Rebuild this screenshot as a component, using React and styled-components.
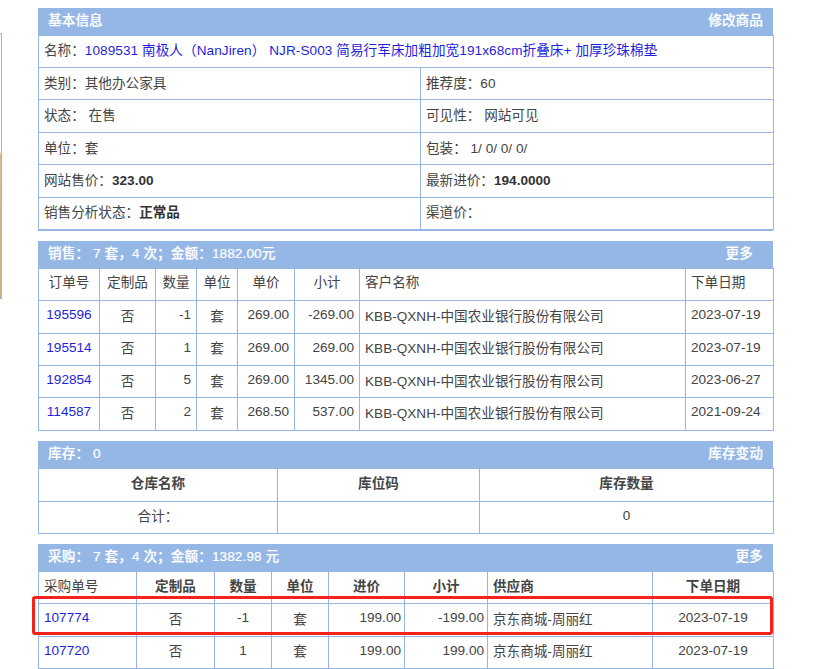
import React from 'react'
import styled, { createGlobalStyle } from 'styled-components'

const GlobalStyle = createGlobalStyle`
  html, body { margin: 0; padding: 0; background: #fff; overflow: hidden; }
  body {
    font-family: "Liberation Sans", "Noto Sans CJK SC", sans-serif;
    font-size: 13.6px;
    color: #444;
  }
`

const Page = styled.div`
  position: relative;
  display: flex;
  width: 821px;
  height: 669px;
  overflow: hidden;
`
const Side = styled.div`
  width: 1px;
  height: 264px;
  margin-top: 33px;
  border-top: 1px solid #95b7e6;
  border-right: 1px solid #95b7e6;
  border-bottom: 1px solid #95b7e6;
  background: linear-gradient(#fff 0 44%, #d9bd92 46%, #cfae84 100%);
`
const Main = styled.div`
  width: 735px;
  margin-left: 36px;
  padding-top: 8px;
`
const Panel = styled.section`
  margin-bottom: 10px;
  border-bottom: ${p => (p.$thick ? '1px' : '0')} solid #95b7e6;
`
const Head = styled.div`
  display: flex;
  justify-content: space-between;
  align-items: center;
  box-sizing: border-box;
  height: ${p => p.$h || 26.7}px;
  padding: 0 10px ${p => p.$up ?? 5}px;
  background: #95b7e6;
  color: #fff;
  font-weight: 500;
  letter-spacing: 0.1px;
  -webkit-text-stroke: 0.2px #fff;
`
const More = styled.a`
  color: #fff;
  margin-right: ${p => p.$inset || 0}px;
`
const Table = styled.table`
  width: 735px;
  table-layout: fixed;
  border-collapse: collapse;
`
const Td = styled.td`
  height: 27.4px;
  padding: 0 ${p => p.$pad ?? 5}px 4px;
  border: 1px solid #95b7e6;
  text-align: ${p => p.$align || 'left'};
  white-space: nowrap;
  overflow: hidden;
`
const Th = styled.th`
  height: 25.4px;
  padding: 0 ${p => p.$pad ?? 5}px 6px;
  border: 1px solid #95b7e6;
  text-align: ${p => p.$align || 'left'};
  font-weight: ${p => (p.$bold ? 700 : 400)};
  white-space: nowrap;
  overflow: hidden;
`
const Blue = styled.a`
  color: #1f1fe0;
`
const NameLink = styled(Blue)`
  letter-spacing: 0.07px;
`
const Strong = styled.b`
  color: #333;
`
const Highlight = styled.div`
  position: absolute;
  left: 32px;
  top: 596px;
  width: 741px;
  height: 38.5px;
  box-sizing: border-box;
  border: 3px solid #f5221b;
  border-radius: 3px;
`

const salesCols = [61, 56, 41, 41, 57, 65, 326, 88]
const sales = [
  ['195596', '-1', '269.00', '-269.00', '2023-07-19'],
  ['195514', '1', '269.00', '269.00', '2023-07-19'],
  ['192854', '5', '269.00', '1345.00', '2023-06-27'],
  ['114587', '2', '268.50', '537.00', '2021-09-24'],
]
const buyCols = [98, 78, 57, 57, 76, 83, 165, 121]
const buys = [
  ['107774', '-1', '-199.00'],
  ['107720', '1', '199.00'],
]

const Cols = ({ w }) => (
  <colgroup>
    {w.map((v, i) => <col key={i} style={{ width: v }} />)}
  </colgroup>
)

export default function App() {
  return (
    <Page>
      <GlobalStyle />
      <Side />
      <Main>
        <Panel $thick>
          <Head><span>基本信息</span><More>修改商品</More></Head>
          <Table>
            <Cols w={[382, 353]} />
            <tbody>
              <tr><Td colSpan={2}>名称：<NameLink>1089531 南极人（NanJiren） NJR-S003 简易行军床加粗加宽191x68cm折叠床+ 加厚珍珠棉垫</NameLink></Td></tr>
              <tr><Td>类别：其他办公家具</Td><Td>推荐度：60</Td></tr>
              <tr><Td>状态：&nbsp;在售</Td><Td>可见性：&nbsp;网站可见</Td></tr>
              <tr><Td>单位：套</Td><Td>包装：&nbsp;1/ 0/ 0/ 0/</Td></tr>
              <tr><Td>网站售价：<Strong>323.00</Strong></Td><Td>最新进价：<Strong>194.0000</Strong></Td></tr>
              <tr><Td>销售分析状态：<Strong>正常品</Strong></Td><Td>渠道价：</Td></tr>
            </tbody>
          </Table>
        </Panel>
        <Panel>
          <Head><span>销售：&nbsp;7 套，4 次；金额：1882.00元</span><More $inset={10}>更多</More></Head>
          <Table>
            <Cols w={salesCols} />
            <tbody>
              <tr>
                <Th $align="center">订单号</Th><Th $align="center">定制品</Th><Th $align="center" $pad={0}>数量</Th><Th $align="center">单位</Th>
                <Th $align="center">单价</Th><Th $align="center">小计</Th><Th>客户名称</Th><Th>下单日期</Th>
              </tr>
              {sales.map(r => (
                <tr key={r[0]}>
                  <Td $align="center"><Blue>{r[0]}</Blue></Td>
                  <Td $align="center">否</Td>
                  <Td $align="right">{r[1]}</Td>
                  <Td $align="center">套</Td>
                  <Td $align="right">{r[2]}</Td>
                  <Td $align="right">{r[3]}</Td>
                  <Td>KBB-QXNH-中国农业银行股份有限公司</Td>
                  <Td>{r[4]}</Td>
                </tr>
              ))}
            </tbody>
          </Table>
        </Panel>
        <Panel>
          <Head $h={27.7} $up={6}><span>库存：&nbsp;0</span><More>库存变动</More></Head>
          <Table>
            <Cols w={[239, 202, 294]} />
            <tbody>
              <tr><Th $align="center" $bold>仓库名称</Th><Th $align="center" $bold>库位码</Th><Th $align="center" $bold>库存数量</Th></tr>
              <tr><Td $align="center">合计：</Td><Td /><Td $align="center">0</Td></tr>
            </tbody>
          </Table>
        </Panel>
        <Panel>
          <Head><span>采购：&nbsp;7 套，4 次；金额：1382.98 元</span><More>更多</More></Head>
          <Table>
            <Cols w={buyCols} />
            <tbody>
              <tr>
                <Th>采购单号</Th><Th $align="center" $bold>定制品</Th><Th $align="center" $bold>数量</Th><Th $align="center" $bold>单位</Th>
                <Th $align="center" $bold>进价</Th><Th $align="center" $bold>小计</Th><Th $bold>供应商</Th><Th $align="center" $bold>下单日期</Th>
              </tr>
              {buys.map(r => (
                <tr key={r[0]}>
                  <Td><Blue>{r[0]}</Blue></Td>
                  <Td $align="center">否</Td>
                  <Td $align="center">{r[1]}</Td>
                  <Td $align="center">套</Td>
                  <Td $align="right" $pad={3}>199.00</Td>
                  <Td $align="right" $pad={3}>{r[2]}</Td>
                  <Td>京东商城-周丽红</Td>
                  <Td $align="center">2023-07-19</Td>
                </tr>
              ))}
            </tbody>
          </Table>
        </Panel>
      </Main>
      <Highlight />
    </Page>
  )
}
